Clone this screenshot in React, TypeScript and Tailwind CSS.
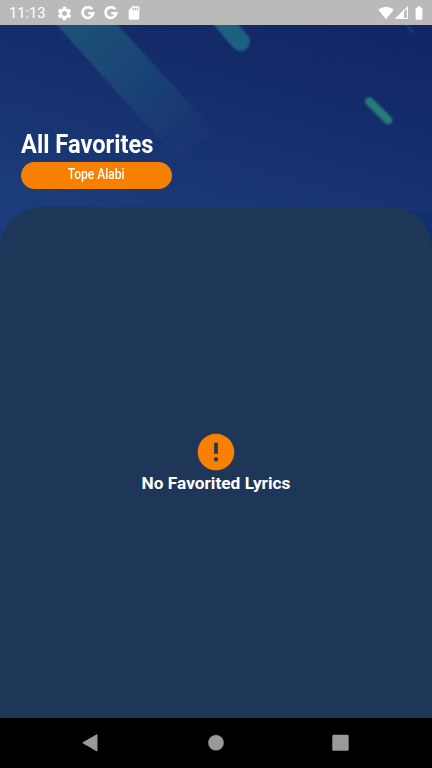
import { MdSettings, MdSdCard, MdError, MdSignalWifi4Bar, MdBatteryFull } from 'react-icons/md';

function GoogleIcon() {
  return (
    <svg className="w-[14px] h-[14px]" viewBox="0 0 14 14" fill="none" stroke="currentColor" strokeWidth={2.6}>
      <path d="M11.3 3.3A5.4 5.4 0 1 0 12.3 7.3H7.2" />
    </svg>
  );
}

function SignalIcon() {
  return (
    <svg className="w-[13px] h-[13px]" viewBox="0 0 13 13" fill="currentColor">
      <path d="M0 13L9 4V13Z" />
      <path d="M1.2 12.5L12.4 1.3V12.5Z" fill="none" stroke="currentColor" strokeWidth={1.1} />
    </svg>
  );
}

function StatusBar() {
  return (
    <div className="relative h-[25px] shrink-0 flex items-center justify-between bg-[#bababa] text-white pl-[9px] pr-[5px]">
      <div className="flex items-center pt-px">
        <span className="w-[47px] text-[14.7px] leading-none">11:13</span>
        <MdSettings className="w-[17px] h-[17px]" />
        <span className="ml-[8px]"><GoogleIcon /></span>
        <span className="ml-[9px]"><GoogleIcon /></span>
        <MdSdCard className="w-[16px] h-[16px] ml-[8px]" />
      </div>
      <div className="flex items-center">
        <MdSignalWifi4Bar className="w-[16px] h-[16px]" />
        <span className="ml-px"><SignalIcon /></span>
        <MdBatteryFull className="w-[16px] h-[16px] ml-[3px]" />
      </div>
    </div>
  );
}

function HeaderArt() {
  return (
    <svg className="absolute inset-x-0 top-0 w-full h-[240px]" viewBox="0 25 432 240">
      <defs>
        <linearGradient id="sky" gradientUnits="userSpaceOnUse" x1="330" y1="25" x2="265" y2="265">
          <stop offset="0" stopColor="#122665" />
          <stop offset="0.5" stopColor="#17306e" />
          <stop offset="1" stopColor="#1b3c7a" />
        </linearGradient>
        <linearGradient id="beam" gradientUnits="userSpaceOnUse" x1="85" y1="25" x2="212" y2="150">
          <stop offset="0" stopColor="#1c5078" />
          <stop offset="0.45" stopColor="#1b4576" stopOpacity="0.9" />
          <stop offset="0.8" stopColor="#1a3c75" stopOpacity="0.5" />
          <stop offset="1" stopColor="#1a3a76" stopOpacity="0" />
        </linearGradient>
        <filter id="soft">
          <feGaussianBlur stdDeviation="0.8" />
        </filter>
      </defs>
      <rect y="25" width="432" height="240" fill="url(#sky)" />
      <g filter="url(#soft)">
        <path d="M56 24H117L278 200H213Z" fill="url(#beam)" />
        <path d="M217 14L240.500 41.500" stroke="#1e6280" strokeWidth={19} strokeLinecap="round" />
        <path d="M369.500 101.500L388 120" stroke="#267c78" strokeWidth={8.5} strokeLinecap="round" />
        <path d="M405 23L413 32" stroke="#17406e" strokeWidth={3} strokeLinecap="round" />
      </g>
      <rect x="380" y="211" width="52" height="54" fill="#10316e" />
    </svg>
  );
}

function NavBar() {
  return (
    <div className="h-[50px] shrink-0 bg-black text-[#999999]">
      <svg className="w-full h-[50px]" viewBox="0 718 432 50" fill="currentColor">
        <path d="M82.8 742.8L97 734.6V751Z" stroke="currentColor" strokeWidth={1} strokeLinejoin="round" />
        <circle cx="216" cy="742.8" r="7.8" />
        <rect x="332.3" y="734.8" width="16.4" height="16" rx="1.2" />
      </svg>
    </div>
  );
}

export default function App() {
  return (
    <div className="w-full h-screen flex flex-col overflow-hidden bg-[#1e3658] font-['Roboto',sans-serif]">
      <StatusBar />

      <div className="relative flex-1 flex flex-col">
        <HeaderArt />

        {/* Header */}
        <header className="relative h-[182px] shrink-0 pl-[21px] pt-[103px] text-white">
          <h1 className="w-max origin-left scale-x-[0.91] text-[26px] leading-[32px] font-bold">All Favorites</h1>
          <div className="w-[151px] h-[27px] mt-[2px] rounded-full bg-[#f88000] flex justify-center">
            <span className="scale-x-[0.86] text-[14px] leading-[25px] font-medium">Tope Alabi</span>
          </div>
        </header>

        {/* Favorites sheet */}
        <main className="relative flex-1 rounded-t-[42px] bg-[#1e3658] flex flex-col items-center pt-[223px]">
          <MdError className="w-[44px] h-[44px] text-[#f88000]" />
          <p className="-mt-px text-[17.3px] leading-[20px] font-bold text-white">No Favorited Lyrics</p>
        </main>
      </div>

      <NavBar />
    </div>
  );
}
